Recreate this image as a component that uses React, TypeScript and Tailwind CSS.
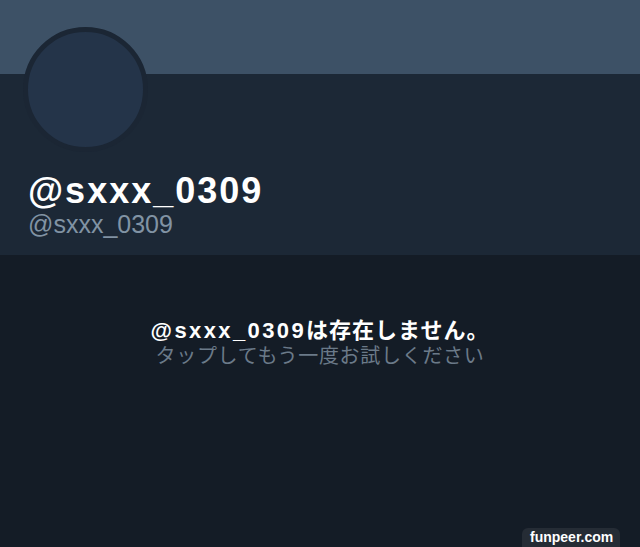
import React from 'react';

const handle = '@sxxx_0309';

const App: React.FC = () => {
  return (
    <div
      className="relative w-[640px] h-[547px] overflow-hidden bg-[#141c26]"
      style={{ fontFamily: '"Liberation Sans", "Noto Sans CJK JP", sans-serif' }}
    >
      {/* Banner */}
      <div className="h-[74px] bg-[#3d5166]" />

      {/* Profile header */}
      <div className="flex flex-col h-[181px] bg-[#1c2836] px-[23px]">
        <div className="self-start -mt-[47px] w-[125px] h-[125px] rounded-full border-[5px] border-[#1b2634] bg-[#243449]" />
        <div className="mt-[21px] pl-[5px]">
          <div className="text-[36px] leading-none font-bold tracking-[2px] text-white">{handle}</div>
          <div className="mt-[3px] text-[25px] leading-none text-[#8193a4]">{handle}</div>
        </div>
      </div>

      {/* Empty state */}
      <div className="flex flex-col items-center pt-[63px]">
        <div className="text-[22px] leading-[26px] font-bold text-white tracking-[1px]">
          <span className="tracking-[2.4px]">{handle}</span>は存在しません。
        </div>
        <div className="text-[20px] leading-[24px] text-[#6b7a89] tracking-[0.7px]">
          タップしてもう一度お試しください
        </div>
      </div>

      {/* Watermark */}
      <div className="absolute left-[522px] top-[528px] w-[98px] h-[19px] rounded-t-md bg-[#252c35] pl-[8px] pt-[1px]">
        <span className="block text-[14px] leading-[16px] font-bold text-white">funpeer.com</span>
      </div>
    </div>
  );
};

export default App;
